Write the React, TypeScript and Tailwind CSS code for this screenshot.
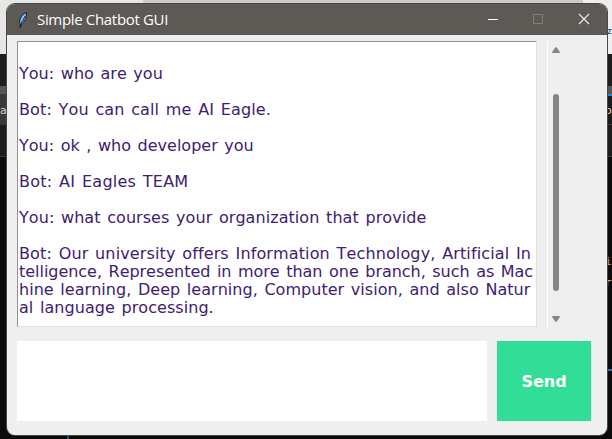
type Line = { text: string; spacing: string };

const messages: Line[][] = [
  [{ text: 'You: who are you', spacing: 'tracking-[0.02px]' }],
  [{ text: 'Bot: You can call me AI Eagle.', spacing: 'tracking-[0.12px]' }],
  [{ text: 'You: ok , who developer you', spacing: 'tracking-[0px]' }],
  [{ text: 'Bot: AI Eagles TEAM', spacing: 'tracking-[0.22px]' }],
  [{ text: 'You: what courses your organization that provide', spacing: 'tracking-[0.06px]' }],
  [
    { text: 'Bot: Our university offers Information Technology, Artificial In', spacing: 'tracking-[0.13px]' },
    { text: 'telligence, Represented in more than one branch, such as Mac', spacing: 'tracking-[-0.03px]' },
    { text: 'hine learning, Deep learning, Computer vision, and also Natur', spacing: 'tracking-[0.035px]' },
    { text: 'al language processing.', spacing: 'tracking-[0.05px]' },
  ],
];

function Desktop() {
  return (
    <div className="flex h-full flex-col bg-[#0b0b0b]">
      <div className="flex h-[54px] shrink-0">
        <div className="w-[143px] bg-[#e6e6e6]" />
        <div className="w-[440px] bg-[#cbcbcb]" />
        <div className="flex-1 bg-[#eeeeee]" />
      </div>
      <div className="h-8 shrink-0 bg-[#1d1d1d]" />
      <div className="h-2 shrink-0 bg-[#565656]" />
      <div className="flex h-[30px] shrink-0">
        <div className="w-1/2 bg-[#393939]" />
        <div className="w-1/2 border-t-2 border-[#2187d8] bg-[#1b1b1b]" />
      </div>
      <div className="h-[33px] shrink-0 border-y border-[#393939] bg-[#1c1c1c]" />
      <div className="h-[212px] shrink-0" />
      <div className="flex h-0.5 shrink-0 justify-end">
        <div className="w-5 bg-[#286bab]" />
      </div>
      <div className="ml-[67px] w-0.5 flex-1 bg-[#23517a]" />
    </div>
  );
}

function Feather() {
  return (
    <svg width="11" height="16" viewBox="0 0 11 16" className="shrink-0">
      <path d="M8.7.4C5 1.8 1.2 6 1.4 10.5L2.3 12 2 15.5l1.5-3.3C7 9.7 8.8 5.4 8.7.4Z" fill="#5ba0ea" stroke="#11151c" strokeWidth=".8" />
      <path d="M7.6 2C5.5 3.2 3.2 6.3 3 9.5L5 6Z" fill="#c9e4fc" />
      <path d="M7.2 4C6 7 3.9 9.5 2.6 12.5v3" fill="none" stroke="#111827" strokeWidth=".8" />
    </svg>
  );
}

function TitleBar() {
  return (
    <div className="flex h-[31px] shrink-0 items-center bg-[#5d5955] pl-[11px]">
      <Feather />
      <span className="ml-2 pb-0.5 font-['Open_Sans','Noto_Sans',sans-serif] text-[15px] leading-5 tracking-[-0.33px] whitespace-nowrap text-white">
        Simple Chatbot GUI
      </span>
      <svg width="104" height="12" viewBox="0 0 104 12" className="mr-4 mb-px ml-auto" fill="none">
        <path d="M1 6.5h10" stroke="#fff" />
        <path d="M46.5 1.5h9v9h-9z" stroke="#827e7a" />
        <path d="m92 1 10 10m0-10L92 11" stroke="#eeeeee" strokeWidth="1.1" />
      </svg>
    </div>
  );
}

function ScrollBar() {
  return (
    <div className="ml-2.5 flex h-[287px] w-[14px] flex-col items-center border-l border-white pt-[6px] pr-[1px] pl-1">
      <svg width="8" height="6" viewBox="0 0 8 6" className="shrink-0">
        <path d="M3.2.5Q4-.2 4.8.5L8 5.2 7.5 6H.5L0 5.2Z" fill="#858585" />
      </svg>
      <div className="mt-[41px] h-[197px] w-1.5 shrink-0 rounded-full bg-[#858585]" />
      <svg width="8" height="6" viewBox="0 0 8 6" className="mt-[25px] shrink-0">
        <path d="M.5 0h7l.5.8-3.2 4.7q-.8.7-1.6 0L0 .8Z" fill="#858585" />
      </svg>
    </div>
  );
}

export default function App() {
  return (
    <div className="relative h-[439px] w-[612px] overflow-hidden">
      <Desktop />
      <span className="absolute top-[103px] left-0 font-['DejaVu_Sans',sans-serif] text-[11px] leading-4 text-[#d4d4d4]">a</span>
      <span className="absolute top-[23px] left-[607px] font-['DejaVu_Sans',sans-serif] text-[9px] leading-4 text-[#243e68]">z</span>
      <span className="absolute top-[103px] left-[605px] font-['DejaVu_Sans',sans-serif] text-[11px] leading-4 text-[#d4d4d4]">o</span>
      <span className="absolute top-[254px] left-[605px] font-['DejaVu_Sans_Mono',monospace] text-[11px] leading-4 text-[#d6a436]">i</span>
      <span className="absolute top-[275px] left-[605px] font-['DejaVu_Sans_Mono',monospace] text-[11px] leading-4 text-[#d4d4d4]">r</span>
      <main className="absolute top-1 left-[7px] flex h-[431px] w-[600px] flex-col overflow-hidden rounded-[8px] bg-[#efefef] shadow-[0_0_0_1px_#484848]">
        <TitleBar />
        <div className="flex pt-1.5 pl-2.5">
          <section className="h-[286px] w-[520px] overflow-hidden border border-t-[#929292] border-r-[#e2e2e2] border-b-[#e2e2e2] border-l-[#929292] bg-white pt-[23px] pl-px font-['DejaVu_Sans',sans-serif] text-[16px] leading-[18px] text-[#3d2072] [font-kerning:none] [font-variant-ligatures:none] [word-spacing:1.5px]">
            {messages.map((lines) => (
              <div key={lines[0].text} className="mb-[18px]">
                {lines.map((line) => (
                  <p key={line.text} className={`whitespace-pre ${line.spacing}`}>{line.text}</p>
                ))}
              </div>
            ))}
          </section>
          <ScrollBar />
        </div>
        <form className="mt-[13px] flex gap-2.5 pl-2.5" onSubmit={(e) => e.preventDefault()}>
          <textarea className="block h-20 w-[470px] resize-none bg-white outline-none" />
          <button className="h-20 w-[94px] bg-[#32de97] pt-px font-['DejaVu_Sans',sans-serif] text-[16px] font-bold text-white">
            Send
          </button>
        </form>
      </main>
    </div>
  );
}
